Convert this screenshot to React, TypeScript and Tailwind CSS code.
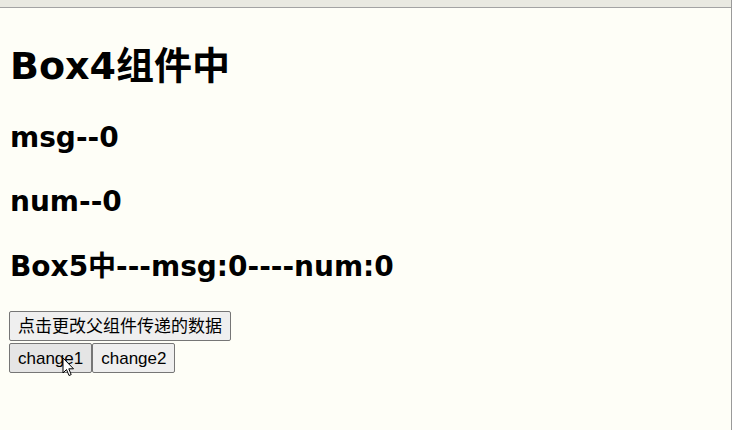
import React from 'react';

function Cursor() {
  return (
    <svg
      className="absolute left-[62px] top-[357px]"
      width="13"
      height="20"
      viewBox="0 0 13 20"
    >
      <path
        d="M1 1 L1 16 L4.5 12.5 L7 18.5 L9.2 17.6 L6.8 11.8 L11.5 11.8 Z"
        fill="#ffffff"
        stroke="#000000"
        strokeWidth="1"
        strokeLinejoin="miter"
      />
    </svg>
  );
}

export default function App() {
  const heading = '"DejaVu Sans", "Noto Sans CJK SC", sans-serif';
  const btn =
    'h-[30px] px-[8px] border border-[#767676] rounded-[2px] text-[17px] leading-none text-black';

  return (
    <div className="relative w-[732px] h-[430px] overflow-hidden bg-[#fefef7] border-r border-[#9a9a9a]">
      <div className="h-[8px] bg-[#e9e9e1] border-b border-[#a3a3a3]" />

      <div className="pl-[10px]" style={{ fontFamily: heading }}>
        <h1 className="mt-[33px] text-[38px] leading-[50px] font-bold text-black">Box4组件中</h1>
        <h2 className="mt-[28px] text-[28px] leading-[38px] font-bold text-black">msg--0</h2>
        <h2 className="mt-[26px] text-[28px] leading-[38px] font-bold text-black">num--0</h2>
        <h2 className="mt-[27px] text-[28px] leading-[38px] font-bold text-black">
          Box5中---msg:0----num:0
        </h2>
      </div>

      <div
        className="pl-[9px] mt-[25px] flex flex-col items-start gap-[2px]"
        style={{ fontFamily: '"Liberation Sans", "Noto Sans CJK SC", sans-serif' }}
      >
        <button className={btn + ' bg-[#efefef]'}>点击更改父组件传递的数据</button>
        <div className="flex">
          <button className={btn + ' bg-[#e5e5e5]'}>change1</button>
          <button className={btn + ' bg-[#efefef]'}>change2</button>
        </div>
      </div>

      <Cursor />
    </div>
  );
}
